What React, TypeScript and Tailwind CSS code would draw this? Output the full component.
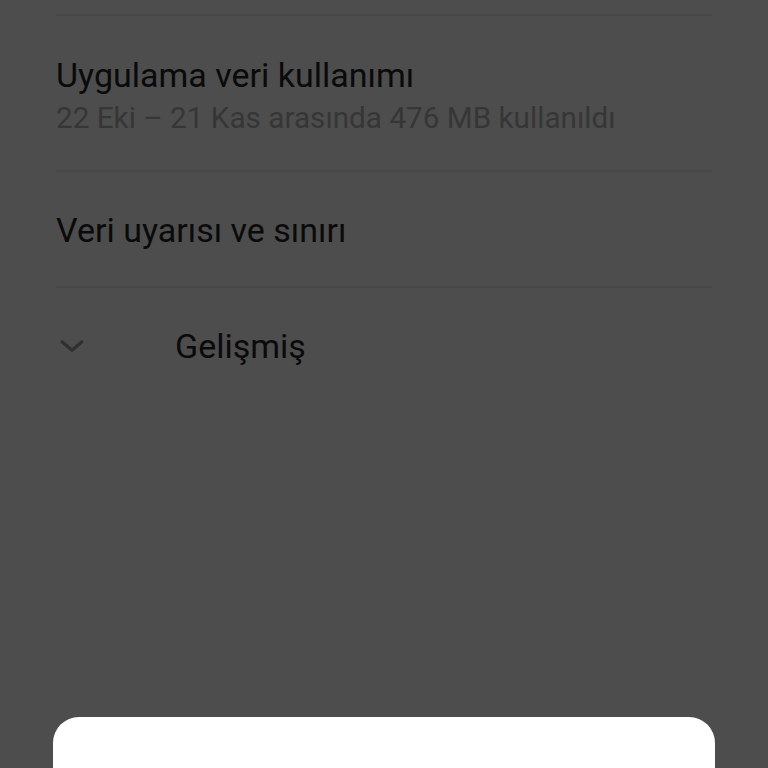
import React from 'react';

const Divider: React.FC = () => <div className="h-[2px] bg-[#474747]" />;

const App: React.FC = () => {
  return (
    <div className="w-[768px] h-[768px] bg-[#4d4d4d] overflow-hidden flex flex-col font-['Roboto',sans-serif]">
      <div className="px-[56px] pt-[14px]">
        <Divider />
        {/* App data usage */}
        <div className="h-[154px] flex flex-col justify-center pt-[6px]">
          <div className="text-[34px] leading-[44px] text-[#0a0a0a]">Uygulama veri kullanımı</div>
          <div className="text-[29.7px] leading-[42px] text-[#363636]">22 Eki – 21 Kas arasında 476 MB kullanıldı</div>
        </div>
        <Divider />
        <div className="h-[114px] flex items-center pt-[2px]">
          <div className="text-[34px] text-[#0a0a0a]">Veri uyarısı ve sınırı</div>
        </div>
        <Divider />
        {/* Advanced */}
        <div className="h-[116px] flex items-center">
          <svg width="34" height="34" viewBox="0 0 24 24" className="ml-[-1px]" fill="none" stroke="#2f2f2f" strokeWidth="2.2" strokeLinecap="round" strokeLinejoin="round">
            <path d="M5 9l7 6 7-6" />
          </svg>
          <div className="ml-[86px] text-[34px] text-[#0a0a0a]">Gelişmiş</div>
        </div>
      </div>
      <div className="flex-1" />
      <div className="mx-[53px] h-[51px] bg-white rounded-t-[26px]" />
    </div>
  );
};

export default App;
